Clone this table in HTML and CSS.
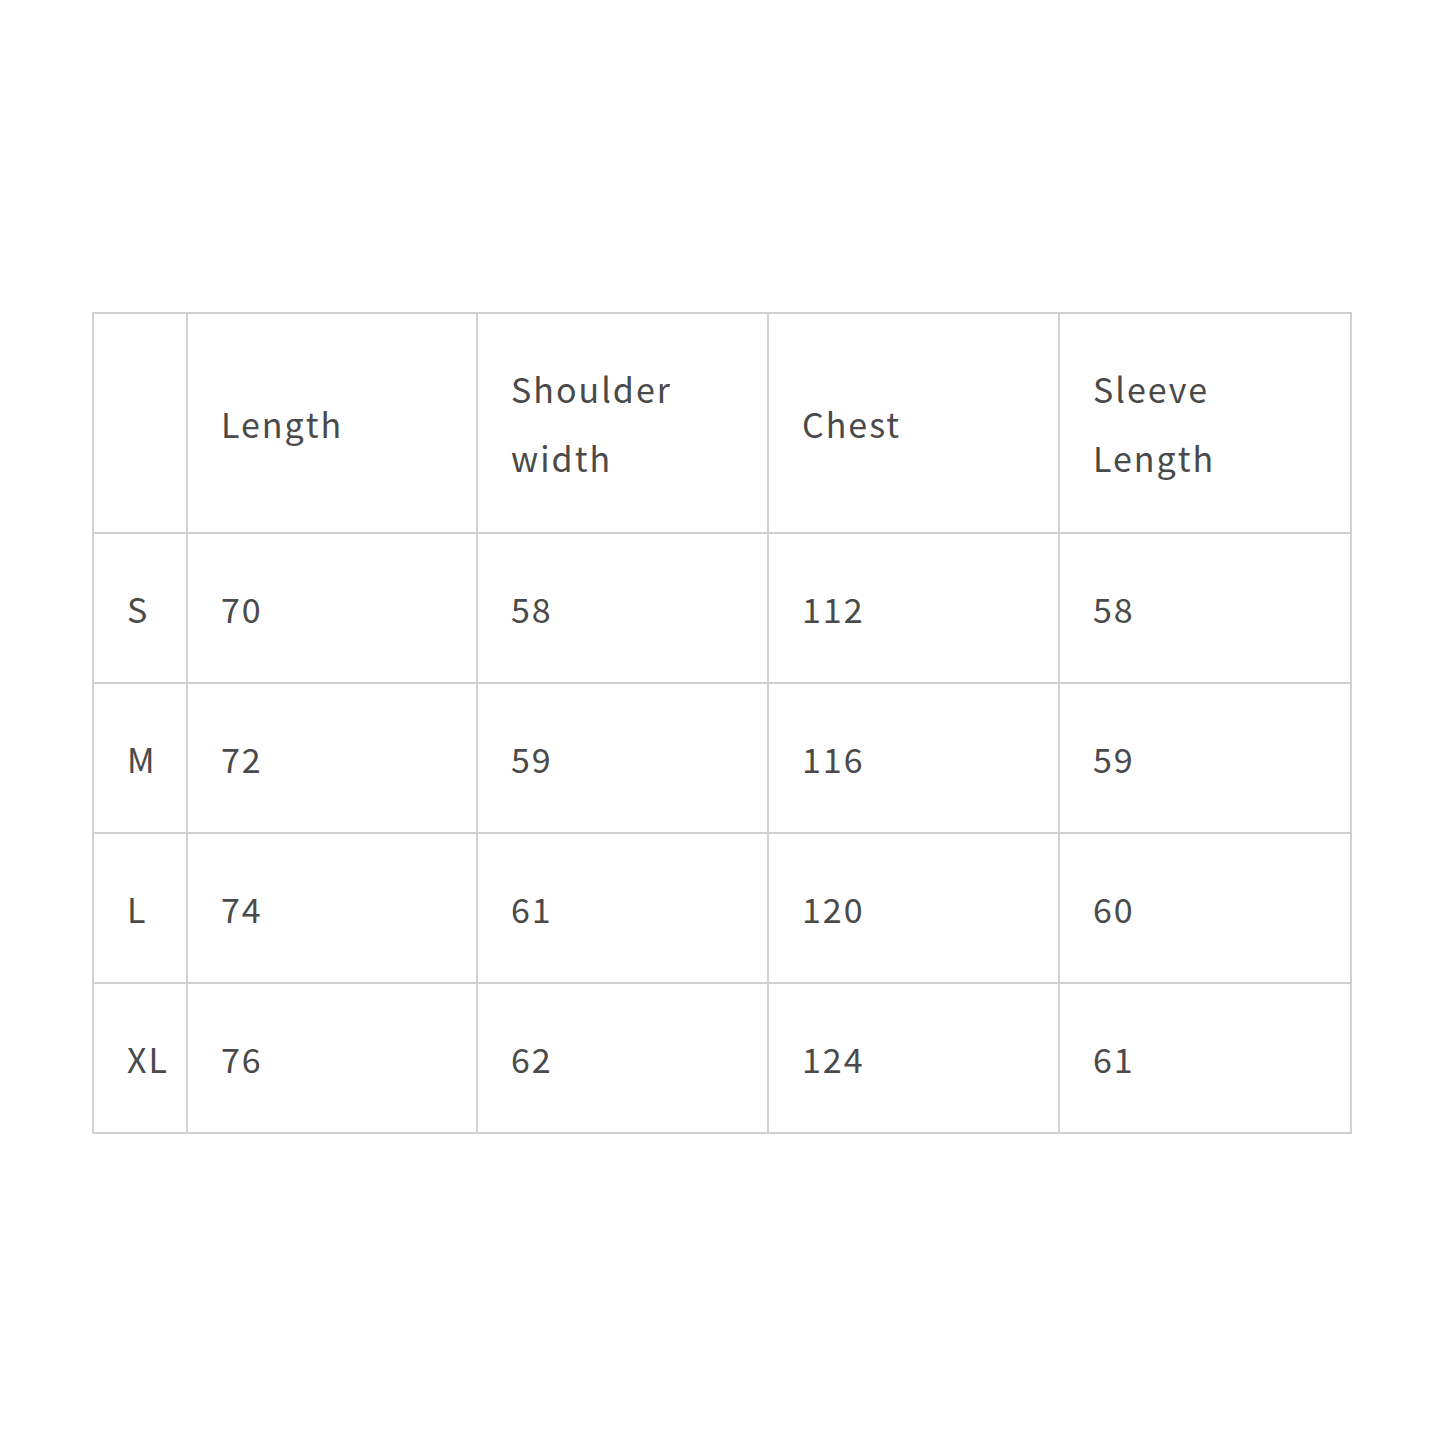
FILE: index.html
```html
<!DOCTYPE html>
<html>
<head>
<meta charset="utf-8">
<link rel="stylesheet" href="styles.css">
</head>
<body>
<div class="page">
<table class="size-table">
  <colgroup>
    <col class="c0"><col class="c1"><col class="c2"><col class="c3"><col class="c4">
  </colgroup>
  <tr class="head">
    <td></td>
    <td>Length</td>
    <td>Shoulder<br>width</td>
    <td>Chest</td>
    <td>Sleeve<br>Length</td>
  </tr>
  <tr><td>S</td><td>70</td><td>58</td><td>112</td><td>58</td></tr>
  <tr><td>M</td><td>72</td><td>59</td><td>116</td><td>59</td></tr>
  <tr><td>L</td><td>74</td><td>61</td><td>120</td><td>60</td></tr>
  <tr><td>XL</td><td>76</td><td>62</td><td>124</td><td>61</td></tr>
</table>
</div>
</body>
</html>
```
FILE: styles.css
```css
html, body {
  margin: 0;
  padding: 0;
  background: #ffffff;
}
.page {
  padding-top: 312px;
  padding-left: 92px;
}
.size-table {
  border-collapse: collapse;
  table-layout: fixed;
  width: 1260px;
  font-family: "Noto Sans CJK JP", "Noto Sans", sans-serif;
  font-size: 34px;
  letter-spacing: 2px;
  color: #4a4a4a;
}
.c0 { width: 94px; }
.c1 { width: 290px; }
.c2 { width: 291px; }
.c3 { width: 291px; }
.c4 { width: 292px; }
.size-table td {
  border: 2px solid #d2d2d2;
  padding: 0 0 0 33px;
  height: 150px;
  vertical-align: middle;
  line-height: 69px;
  box-sizing: border-box;
}
.size-table tr.head td {
  height: 220px;
}
```
